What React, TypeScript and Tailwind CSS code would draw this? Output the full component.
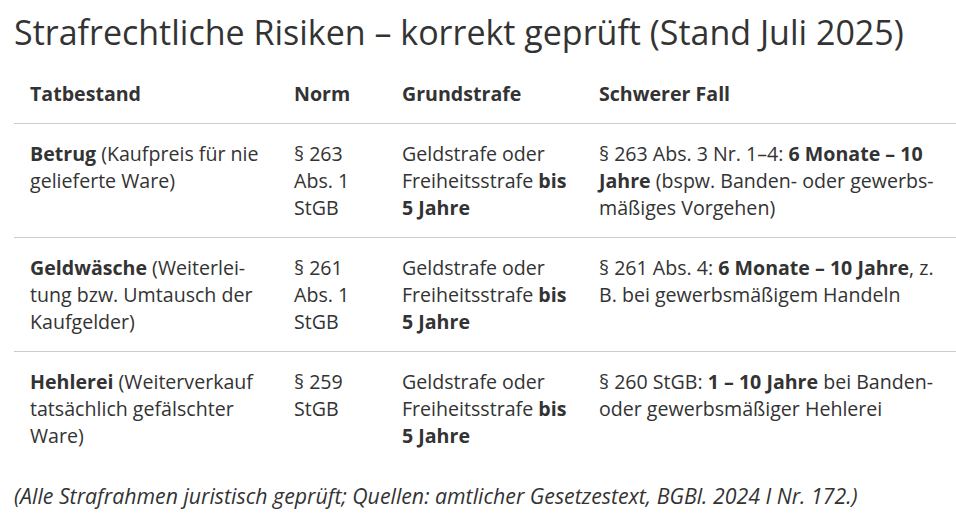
const rows = [
  {
    tat: (
      <>
        <strong>Betrug</strong> (Kaufpreis für nie gelieferte Ware)
      </>
    ),
    norm: "§ 263 Abs. 1 StGB",
    grund: (
      <>
        Geldstrafe oder Freiheitsstrafe <strong>bis 5 Jahre</strong>
      </>
    ),
    schwer: (
      <>
        § 263 Abs. 3 Nr. 1–4: <strong>6 Monate – 10 Jahre</strong> (bspw. Banden- oder gewerbs­mäßiges Vorgehen)
      </>
    ),
  },
  {
    tat: (
      <>
        <strong>Geldwäsche</strong> (Weiterlei­tung bzw. Umtausch der Kaufgelder)
      </>
    ),
    norm: "§ 261 Abs. 1 StGB",
    grund: (
      <>
        Geldstrafe oder Freiheitsstrafe <strong>bis 5 Jahre</strong>
      </>
    ),
    schwer: (
      <>
        § 261 Abs. 4: <strong>6 Monate – 10 Jahre</strong>, z. B. bei gewerbsmäßigem Handeln
      </>
    ),
  },
  {
    tat: (
      <>
        <strong>Hehlerei</strong> (Weiterverkauf tatsächlich gefälschter Ware)
      </>
    ),
    norm: "§ 259 StGB",
    grund: (
      <>
        Geldstrafe oder Freiheitsstrafe <strong>bis 5 Jahre</strong>
      </>
    ),
    schwer: (
      <>
        § 260 StGB: <strong>1 – 10 Jahre</strong> bei Banden- oder gewerbsmäßiger Hehlerei
      </>
    ),
  },
];

export default function App() {
  return (
    <div className="min-h-screen bg-white pl-[14px] text-[#333] font-['Open_Sans',sans-serif]">
      <h2 className="pt-[12px] text-[34px] leading-[1.2] font-medium">
        Strafrechtliche Risiken – korrekt geprüft (Stand Juli 2025)
      </h2>

      <table className="mt-[11px] w-full border-collapse text-left text-[19.6px] leading-[27px]">
        <thead>
          <tr className="border-b border-[#ccc]">
            <th className="w-[264px] p-4 font-bold">Tatbestand</th>
            <th className="w-[108px] p-4 font-bold">Norm</th>
            <th className="w-[197px] p-4 font-bold">Grundstrafe</th>
            <th className="p-4 font-bold">Schwerer Fall</th>
          </tr>
        </thead>
        <tbody>
          {rows.map((row, i) => (
            <tr key={i} className={i < rows.length - 1 ? "border-b border-[#ccc]" : ""}>
              <td className="p-4 align-top">{row.tat}</td>
              <td className="p-4 align-top">{row.norm}</td>
              <td className="p-4 align-top">{row.grund}</td>
              <td className="p-4 align-top">{row.schwer}</td>
            </tr>
          ))}
        </tbody>
      </table>

      <p className="mt-[17px] text-[21.3px] leading-[28px] italic">
        (Alle Strafrahmen juristisch geprüft; Quellen: amtlicher Gesetzestext, BGBl. 2024 I Nr. 172.)
      </p>
    </div>
  );
}
